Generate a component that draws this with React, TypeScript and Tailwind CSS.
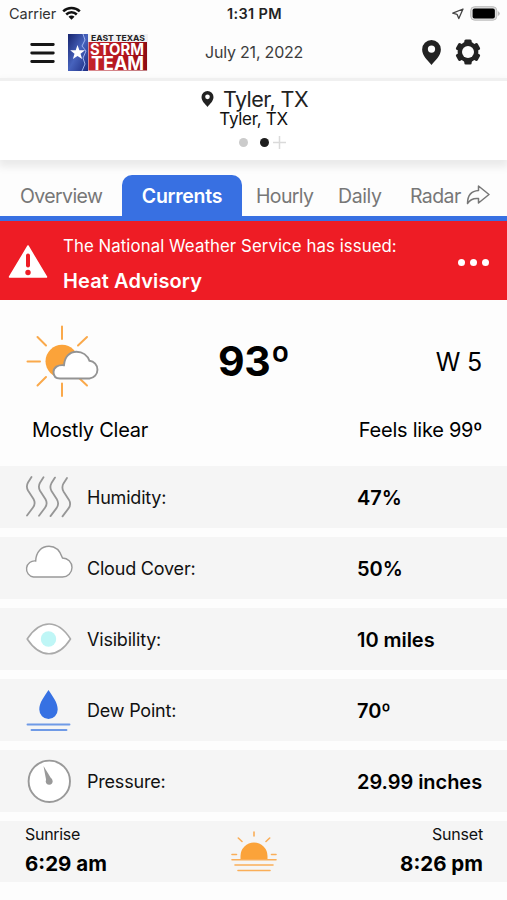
import type { ReactNode } from 'react'

function Pin({ className }: { className?: string }) {
  return (
    <svg viewBox="0 0 18 24" className={className} fill="#222">
      <path fillRule="evenodd" d="M9 0a9 9 0 0 0-9 9c0 6 5.500 10.500 9 15 3.500-4.500 9-9 9-15a9 9 0 0 0-9-9Zm0 5.200a3.500 3.500 0 1 1 0 7 3.500 3.500 0 0 1 0-7Z" />
    </svg>
  )
}

function Logo() {
  return (
    <svg width="80" height="37" viewBox="0 0 80 37" className="block overflow-visible">
      <defs>
        <linearGradient id="sky" x1="0" y1="0" x2="1" y2="1">
          <stop offset="0" stopColor="#17246e" />
          <stop offset=".5" stopColor="#4763bd" />
          <stop offset="1" stopColor="#1c2b80" />
        </linearGradient>
        <linearGradient id="brick" x1="0" x2="1">
          <stop offset="0" stopColor="#c4242b" />
          <stop offset=".6" stopColor="#b3141c" />
          <stop offset="1" stopColor="#8e0d14" />
        </linearGradient>
      </defs>
      <rect width="80" height="37" fill="#f1f1f3" />
      <rect width="20" height="37" fill="url(#sky)" />
      <path d="M15 0 17 6 14 12 18 17 15 24 17 30 14 37" fill="none" stroke="#9db2ef" strokeWidth="1" />
      <path d="m9.500 11 1.900 5.200 5.600.1-4.500 3.400 1.700 5.400-4.700-3.200-4.600 3.200 1.600-5.400L2.200 16.300l5.500-.1Z" fill="#fff" />
      <rect x="20.500" y="8" width="58.500" height="28.500" fill="url(#brick)" />
      <g fontFamily="Inter, sans-serif">
        <text x="23" y="6.900" fontSize="8" fontWeight="700" fill="#222" textLength="54" lengthAdjust="spacingAndGlyphs">EAST TEXAS</text>
        <text x="22" y="21.200" fontSize="16.500" fontWeight="700" fill="#fff" textLength="54" lengthAdjust="spacingAndGlyphs">STORM</text>
        <text x="23" y="36" fontSize="18.500" fontWeight="700" fill="#fff" textLength="53" lengthAdjust="spacingAndGlyphs">TEAM</text>
      </g>
    </svg>
  )
}

function HumidityIcon() {
  return (
    <svg width="48" height="44" viewBox="0 0 48 44" fill="none" stroke="#969696" strokeWidth="1.800" strokeLinecap="round" strokeLinejoin="round" className="relative top-px">
      {[0, 12, 23.500, 35.500].map((x, i) => (
        <path key={x} transform={`translate(${x} ${i * 0.3})`} d="M6.500 1 3 6.500Q.8 10.500 3 14.500L8.500 23Q11 27.500 8 31.500L2 39.500" />
      ))}
    </svg>
  )
}

function CloudIcon() {
  return (
    <svg width="48" height="44" viewBox="0 0 48 44" fill="#fff" stroke="#999" strokeWidth="1.400" className="relative -top-[8px]">
      <path d="M8.500 39H37.500A9.300 9.300 0 0 0 37.500 20C35 12.500 30.500 8.300 24 8.300 16.500 8.300 11 14 10.700 23A8 8 0 1 0 8.500 39Z" />
    </svg>
  )
}

function EyeIcon() {
  return (
    <svg width="48" height="44" viewBox="0 0 48 44">
      <path d="M2.200 22Q12 7 24 7T45.500 22Q36 36.800 24 36.800T2.200 22Z" fill="#fff" stroke="#aaa" strokeWidth="1.600" strokeLinejoin="round" />
      <circle cx="23.500" cy="22" r="7.700" fill="#bff6f6" />
    </svg>
  )
}

function DewIcon() {
  return (
    <svg width="48" height="44" viewBox="0 0 48 44" className="relative top-px">
      <path d="M23.500 1C19 8 14.300 13.500 14.300 20.500a9.200 9.600 0 0 0 18.400 0C32.700 13.500 28 8 23.500 1Z" fill="#3671e3" />
      <path d="M2.500 35.500H44.500M6.500 41H41.500" stroke="#6f9ae6" strokeWidth="1.900" strokeLinecap="round" />
    </svg>
  )
}

function GaugeIcon() {
  return (
    <svg width="48" height="44" viewBox="0 0 48 44">
      <circle cx="24.300" cy="22.300" r="20.700" fill="#fff" stroke="#999" strokeWidth="1.900" />
      <path d="M18.500 7 26.800 20.500 23 24 21.300 22Z" fill="#999" />
      <circle cx="24.200" cy="22.300" r="3.400" fill="#999" />
    </svg>
  )
}

function PartlySunny() {
  return (
    <svg width="74" height="74" viewBox="0 0 74 74" fill="none" strokeLinecap="round" className="relative -top-px">
      <path d="M36 2.500V15M36 59.500V72M1.500 37.500H14M11.500 13 20 21.500M61 13 52 21.500M11.500 61.500 20 53M61 61.500 52 53" stroke="#faa94b" strokeWidth="2" />
      <circle cx="36" cy="37.300" r="16.500" fill="#fba33a" />
      <path d="M33 54.500H63.500A8.900 8.900 0 0 0 63.500 36.800C61.500 31.500 56.500 27.700 50.500 27.700 43.500 27.700 38.500 33 38 41.200 32 40.500 27.500 43.500 27.500 48 27.500 52 30 54.500 34 54.500Z" fill="#fff" stroke="#949494" strokeWidth="1.900" />
    </svg>
  )
}

function SunsetIcon() {
  return (
    <svg width="46" height="42" viewBox="0 0 46 42">
      <path d="M9.500 28.500V25a13.500 13.500 0 0 1 27 0v3.500Z" fill="#fba33a" />
      <path d="M23 1V5M7.300 7 11 10.500M38.700 7 35 10.500M1 23.500H5.500M40.500 23.500H45M1 28.700H45M4 34H42M7 39.500H39" stroke="#faae58" strokeWidth="1.600" strokeLinecap="round" />
    </svg>
  )
}

const rows: { label: string; value: string; icon: ReactNode }[] = [
  { label: 'Humidity:', value: '47%', icon: <HumidityIcon /> },
  { label: 'Cloud Cover:', value: '50%', icon: <CloudIcon /> },
  { label: 'Visibility:', value: '10 miles', icon: <EyeIcon /> },
  { label: 'Dew Point:', value: '70º', icon: <DewIcon /> },
  { label: 'Pressure:', value: '29.99 inches', icon: <GaugeIcon /> },
]

function StatusBar() {
  return (
    <div className="grid h-7 grid-cols-3 items-center pl-[9px] pr-[7px] text-[14.500px] leading-none text-[#333]">
      <div className="flex items-center gap-[6px]">
        <span className="tracking-[-0.050px]">Carrier</span>
        <svg width="19" height="14" viewBox="0 0 19 14" fill="none" stroke="#111" strokeWidth="2.500" className="relative -top-px">
          <path d="M1.200 5.300a11.800 11.800 0 0 1 16.600 0M4.200 8.500a7.500 7.500 0 0 1 10.600 0" />
          <path d="M6.500 10.800a4.200 4.200 0 0 1 6 0L9.500 13.800Z" fill="#111" stroke="none" />
        </svg>
      </div>
      <div className="text-center text-[14.500px] font-semibold tracking-[0.350px] text-[#222]">1:31 PM</div>
      <div className="flex items-center justify-end gap-1.5">
        <svg width="12" height="12" viewBox="0 0 12 12" fill="none" stroke="#444" strokeWidth="1.300" strokeLinejoin="round">
          <path d="M11 1 .8 5.200 5 6.300 6.800 10.600Z" />
        </svg>
        <svg width="30" height="15" viewBox="0 0 31 15" preserveAspectRatio="none" className="relative -top-px">
          <rect x=".7" y=".7" width="27" height="13.500" rx="4" fill="#ddd" stroke="#bbb" />
          <rect x="2.700" y="2.500" width="23" height="10" rx="2" fill="#000" />
          <path d="M28.800 5v5q2-1 2-2.500t-2-2.500Z" fill="#bbb" />
        </svg>
      </div>
    </div>
  )
}

export default function App() {
  return (
    <div className="flex h-[900px] w-[507px] flex-col overflow-hidden bg-[#fdfdfd] font-['Inter',sans-serif] text-[#111]">
      <StatusBar />
      <header className="flex h-[50px] shrink-0 items-center bg-[#fdfdfd] pb-px pl-[30px] pr-[26px]">
        <svg width="25" height="22" viewBox="0 0 25 22" stroke="#161616" strokeWidth="2.800" strokeLinecap="round">
          <path d="M1.700 2.500H23.300M1.700 11H23.300M1.700 19.500H23.300" />
        </svg>
        <div className="ml-[13px]"><Logo /></div>
        <div className="ml-[57px] pb-0.5 text-[16px] tracking-[-0.200px] text-[#3c3c3c]">July 21, 2022</div>
        <Pin className="ml-auto h-[25px] w-[19px]" />
        <svg width="26" height="26" viewBox="0 0 26 26" className="relative -top-px ml-[14px]">
          <g fill="#222">
            {[0, 60, 120].map(a => <rect key={a} x="9.300" y=".5" width="7.400" height="25" rx="1.500" transform={`rotate(${a} 13 13)`} />)}
            <circle cx="13" cy="13" r="10.400" />
          </g>
          <circle cx="13" cy="13" r="6" fill="#fdfdfd" />
        </svg>
      </header>
      <section className="z-10 flex h-[82px] shrink-0 flex-col items-center border-t-3 border-[#f0f0f0] bg-white shadow-[0_5px_8px_2px_rgba(0,0,0,0.080)]">
        <div className="mt-1 flex h-7 items-center gap-[9px] pl-0.5">
          <Pin className="h-4 w-[13px]" />
          <span className="text-[21.500px] leading-7 tracking-[-0.550px] text-[#222]">Tyler, TX</span>
        </div>
        <div className="-mt-1 text-[17px] leading-5 tracking-[-0.300px]">Tyler, TX</div>
        <div className="mt-[5px] flex h-4 items-center pl-[18px]">
          <i className="h-[9px] w-[9px] rounded-full bg-[#cbcbcb]" />
          <i className="ml-3 h-[9px] w-[9px] rounded-full bg-[#1e1e1e]" />
          <svg width="13" height="13" viewBox="0 0 13 13" className="ml-1" stroke="#dadada" strokeWidth="1.500"><path d="M6.500 0V13M0 6.500H13" /></svg>
        </div>
      </section>
      <nav className="flex h-[61px] shrink-0 items-end border-b-5 border-[#3870e2] text-[19.500px] tracking-[-0.400px] text-[#777]">
        <div className="flex h-[41px] w-[122px] items-center pl-5 pt-0.5 tracking-[-0.600px]">Overview</div>
        <div className="flex h-[41px] w-[120px] items-center justify-center rounded-t-[10px] bg-[#3870e2] pt-0.5 font-semibold tracking-[-0.250px] text-white">Currents</div>
        <div className="flex h-[41px] w-[96px] items-center pl-[14px] pt-0.5 tracking-[-0.650px]">Hourly</div>
        <div className="flex h-[41px] w-[72px] items-center pt-0.5">Daily</div>
        <div className="flex h-[41px] items-center gap-[5px] pt-0.5">
          <span className="tracking-[-0.600px]">Radar</span>
          <svg width="24" height="21" viewBox="0 0 24 21" fill="none" stroke="#777" strokeWidth="1.500" strokeLinejoin="round" className="relative -top-px">
            <path d="M12.500 1 23 9.500 12.500 18V13.500C7.500 13 4 14.500 1.500 18.500 1.500 10.500 5 6 12.500 5.500Z" />
          </svg>
        </div>
      </nav>
      <section className="flex h-[79px] shrink-0 items-center bg-[#ee1c25] pl-2 pr-[17px] text-white">
        <svg width="40" height="35" viewBox="0 0 40 35" className="relative -top-px mt-1">
          <path d="M20 2 38.500 33H1.500Z" fill="#fff" stroke="#fff" strokeWidth="1.500" strokeLinejoin="round" />
          <path d="M20 11.500V21.500" stroke="#ee1c25" strokeWidth="4" strokeLinecap="round" />
          <circle cx="20" cy="28.500" r="2.700" fill="#ee1c25" />
        </svg>
        <div className="ml-[15px] pt-1.5">
          <div className="text-[16.800px] leading-6 tracking-[0.080px]">The National Weather Service has issued:</div>
          <div className="mt-[11px] text-[20px] font-semibold leading-6 tracking-[0.120px]">Heat Advisory</div>
        </div>
        <div className="ml-auto mt-[3px] flex gap-[5px] pr-px">
          <i className="h-[7px] w-[7px] rounded-full bg-white" />
          <i className="h-[7px] w-[7px] rounded-full bg-white" />
          <i className="h-[7px] w-[7px] rounded-full bg-white" />
        </div>
      </section>
      <section className="h-[166px] shrink-0 pl-[26px] pr-[25px] pt-6 text-black">
        <div className="grid h-[75px] grid-cols-3 items-center">
          <PartlySunny />
          <div className="text-center text-[41px] font-bold tracking-[-0.300px]">93º</div>
          <div className="pt-0.5 text-right text-[25px] tracking-[-0.200px]">W 5</div>
        </div>
        <div className="mt-[19px] flex justify-between pl-[6px] text-[20px] leading-6 tracking-[-0.250px]">
          <span>Mostly Clear</span>
          <span>Feels like 99º</span>
        </div>
      </section>
      <main className="flex flex-col gap-[9px]">
        {rows.map(r => (
          <div key={r.label} className="flex h-[62px] items-center bg-[#f5f5f5] pl-[25px]">
            {r.icon}
            <div className="ml-[14px] w-[270px] text-[18px] tracking-[-0.200px]">{r.label}</div>
            <div className="pt-px text-[20px] font-semibold tracking-[-0.050px] text-black">{r.value}</div>
          </div>
        ))}
        <div className="flex h-[61px] justify-between bg-[#f5f5f5] pl-[25px] pr-[24px] pt-px">
          <div className="w-[110px]">
            <div className="text-[16px] leading-6 tracking-[-0.300px]">Sunrise</div>
            <div className="mt-[4px] text-[20.500px] font-bold leading-7 text-black">6:29 am</div>
          </div>
          <div className="mt-[9px]"><SunsetIcon /></div>
          <div className="w-[110px] text-right">
            <div className="text-[16px] leading-6 tracking-[-0.200px]">Sunset</div>
            <div className="mt-[4px] text-[20.500px] font-bold leading-7 text-black">8:26 pm</div>
          </div>
        </div>
      </main>
    </div>
  )
}
